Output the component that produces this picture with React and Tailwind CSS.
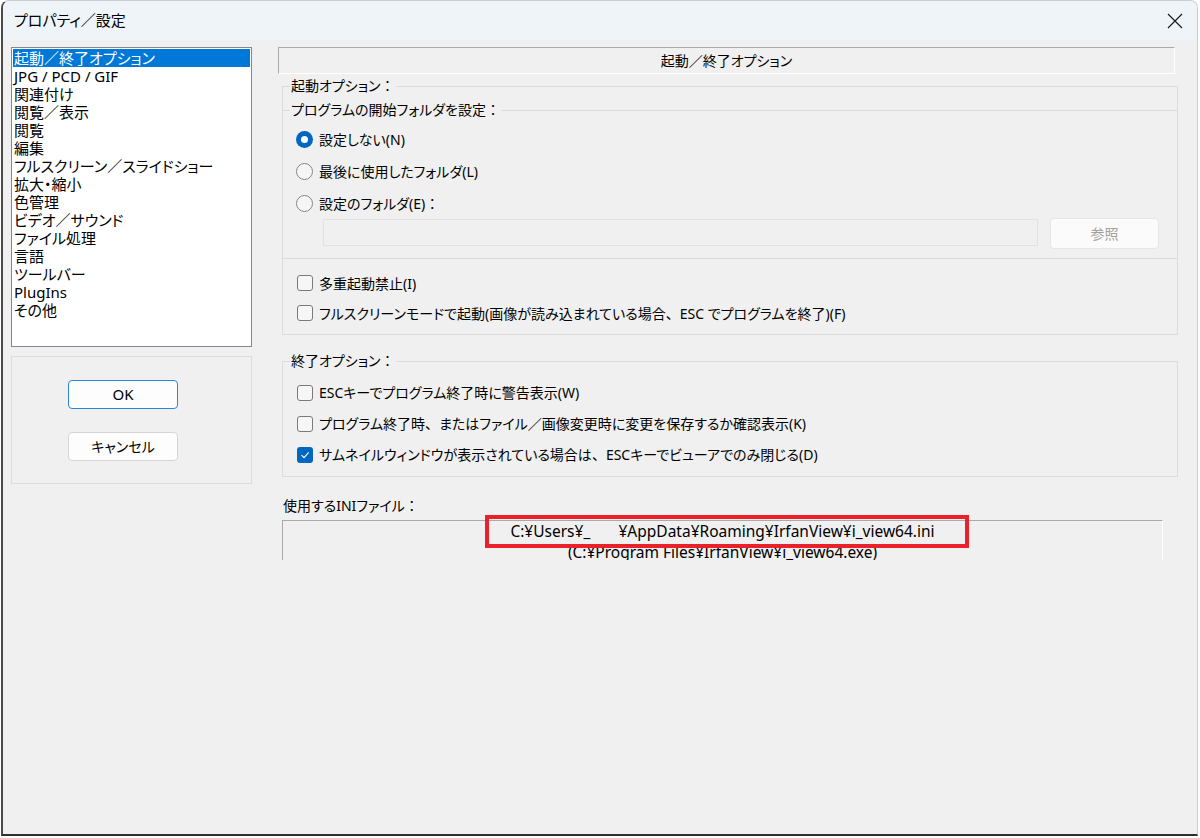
import React from "react";

const listItems = [
  "起動／終了オプション",
  "JPG / PCD / GIF",
  "関連付け",
  "閲覧／表示",
  "閲覧",
  "編集",
  "フルスクリーン／スライドショー",
  "拡大・縮小",
  "色管理",
  "ビデオ／サウンド",
  "ファイル処理",
  "言語",
  "ツールバー",
  "PlugIns",
  "その他",
];

// full-width punctuation kept at full width (no palt)
const W = ({ children }) => (
  <span className="[font-feature-settings:normal]">{children}</span>
);

const Radio = ({ checked, children }) => (
  <div className="flex items-center h-[32px]">
    {checked ? (
      <div className="w-[17px] h-[17px] rounded-full bg-[#0067c0] flex items-center justify-center">
        <div className="w-[7px] h-[7px] rounded-full bg-white" />
      </div>
    ) : (
      <div className="w-[17px] h-[17px] rounded-full border border-[#858585] bg-[#f6f6f6]" />
    )}
    <span className="ml-[6px]">{children}</span>
  </div>
);

const Check = ({ checked, children, h = "h-[30px]" }) => (
  <div className={`flex items-center ${h}`}>
    {checked ? (
      <div className="w-[16px] h-[16px] rounded-[3px] bg-[#0067c0] flex items-center justify-center">
        <svg width="10" height="10" viewBox="0 0 10 10" fill="none">
          <path d="M1.5 5.2 L4 7.6 L8.7 2.4" stroke="white" strokeWidth="1.1" />
        </svg>
      </div>
    ) : (
      <div className="w-[16px] h-[16px] rounded-[3px] border border-[#7a7a7a] bg-[#f6f6f6]" />
    )}
    <span className="ml-[6px]">{children}</span>
  </div>
);

const GroupLabel = ({ children }) => (
  <span className="absolute left-[7px] top-[-10px] px-[1px] bg-[#f0f0f0] leading-[18px]">
    {children}
  </span>
);

export default function App() {
  return (
    <div className="relative w-[1200px] h-[838px] bg-white text-[14px] text-black font-['Noto_Sans','Noto_Sans_CJK_JP',sans-serif] [font-feature-settings:'palt']">
      <div className="ml-[1px] w-[1197px] h-[836px] rounded-t-[8px] border-t border-r border-[#c9ced4] border-l-2 border-l-[#4d4a47] border-b-2 border-b-[#2f2f2f] bg-[#f0f0f0] overflow-hidden flex flex-col">
        {/* title bar */}
        <div className="h-[39px] bg-[#eff4f9] flex items-center justify-between pl-[11px] pr-[14px]">
          <span className="text-[15px]">プロパティ／設定</span>
          <svg width="16" height="16" viewBox="0 0 16 16" fill="none">
            <path d="M1 1 L15 15 M15 1 L1 15" stroke="#1b1b1b" strokeWidth="1.2" />
          </svg>
        </div>

        <div className="flex pl-[8px] pt-[7px]">
          {/* left column */}
          <div className="w-[241px] flex flex-col">
            <div className="h-[300px] border border-[#828790] bg-white p-[1px] text-[15px]">
              {listItems.map((item, i) => (
                <div
                  key={item}
                  className={`h-[18px] leading-[18px] pl-[1px] whitespace-nowrap ${
                    i === 0 ? "bg-[#0078d7] text-white" : ""
                  }`}
                >
                  {item}
                </div>
              ))}
            </div>
            <div className="mt-[9px] h-[128px] border border-[#dcdcdc] pt-[23px] pl-[56px]">
              <div className="w-[110px] h-[29px] rounded-[4px] border border-[#2a86d9] bg-[#fdfdfd] flex items-center justify-center text-[15px]">
                OK
              </div>
              <div className="mt-[23px] w-[110px] h-[29px] rounded-[4px] border border-[#d5d5d5] bg-[#fdfdfd] flex items-center justify-center">
                キャンセル
              </div>
            </div>
          </div>

          {/* right column */}
          <div className="ml-[26px] w-[900px]">
            <div className="w-[897px] h-[27px] border-t border-l border-[#a9a9a9] border-b border-r border-b-white border-r-white flex items-center justify-center">
              起動／終了オプション
            </div>

            <div className="ml-[4px] w-[896px]">
              {/* start options */}
              <div className="relative mt-[12px] h-[249px] border border-[#dcdcdc]">
                <GroupLabel>起動オプション<W>：</W></GroupLabel>
                <div className="relative mt-[23px] h-[149px] border-t border-b border-[#dcdcdc] pt-[12px]">
                  <GroupLabel>プログラムの開始フォルダを設定<W>：</W></GroupLabel>
                  <div className="pl-[13px]">
                    <Radio checked>設定しない(N)</Radio>
                    <Radio>最後に使用したフォルダ(L)</Radio>
                    <Radio>設定のフォルダ(E)<W>：</W></Radio>
                  </div>
                  <div className="flex items-start pl-[40px]">
                    <div className="w-[715px] h-[27px] border border-[#e2e2e2] bg-[#f0f0f0]" />
                    <div className="ml-[12px] mt-[-1px] w-[109px] h-[31px] rounded-[4px] border border-[#e6e6e6] bg-[#fbfbfb] text-[#a0a0a0] flex items-center justify-center">
                      参照
                    </div>
                  </div>
                </div>
                <div className="mt-[9px] pl-[14px]">
                  <Check>多重起動禁止(I)</Check>
                  <Check>
                    フルスクリーンモードで起動(画像が読み込まれている場合<W>、</W>ESC でプログラムを終了)(F)
                  </Check>
                </div>
              </div>

              {/* exit options */}
              <div className="relative mt-[26px] h-[116px] border border-[#dcdcdc] pt-[15px] pl-[14px]">
                <GroupLabel>終了オプション<W>：</W></GroupLabel>
                <Check h="h-[31px]">ESCキーでプログラム終了時に警告表示(W)</Check>
                <Check h="h-[31px]">
                  プログラム終了時<W>、</W>またはファイル／画像変更時に変更を保存するか確認表示(K)
                </Check>
                <Check h="h-[31px]" checked>
                  サムネイルウィンドウが表示されている場合は<W>、</W>ESCキーでビューアでのみ閉じる(D)
                </Check>
              </div>

              <div className="mt-[20px] pl-[1px] leading-[18px]">
                使用するINIファイル<W>：</W>
              </div>
              <div className="mt-[5px] w-[881px] h-[40px] border-t border-l border-[#a9a9a9] border-r border-r-white overflow-hidden text-center text-[15.5px] leading-[21px] whitespace-pre">
                <div>C:¥Users¥_       ¥AppData¥Roaming¥IrfanView¥i_view64.ini</div>
                <div>(C:¥Program Files¥IrfanView¥i_view64.exe)</div>
              </div>
            </div>
          </div>
        </div>
      </div>

      {/* red annotation */}
      <div className="absolute left-[485px] top-[515px] w-[484px] h-[33px] border-[4px] border-[#e8212b]" />
    </div>
  );
}
